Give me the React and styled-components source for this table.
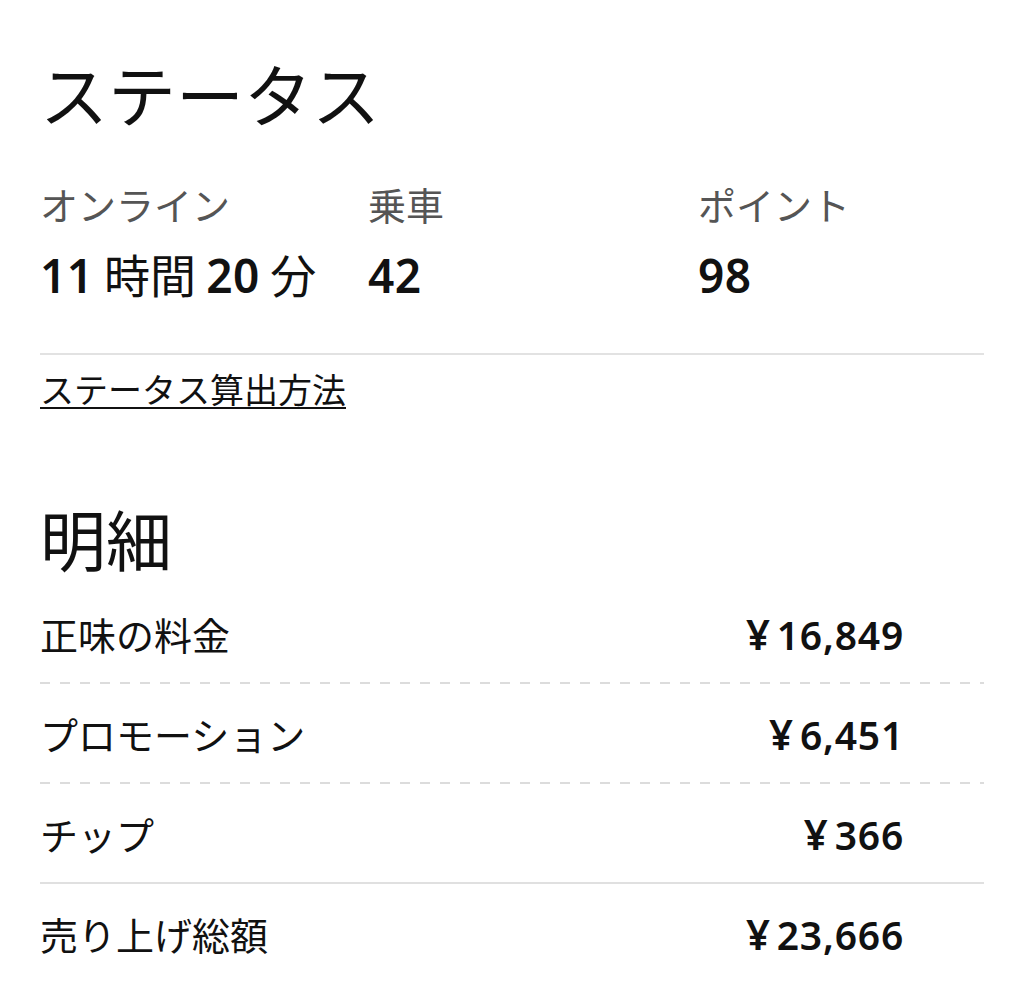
import React from 'react'
import styled, { createGlobalStyle } from 'styled-components'

const GlobalStyle = createGlobalStyle`
body {
  margin: 0;
  background: #fff;
  font-family: "Noto Sans CJK JP", "Noto Sans", sans-serif;
  color: #111;
}
`;

const Page = styled.div`
padding: 53px 40px 0 40px;
`;

const Heading = styled.h1`
margin: 0;
font-size: 68px;
line-height: 80px;
font-weight: 400;
color: #111;
`;

const StatGrid = styled.div`
display: grid;
grid-template-columns: 328px 330px 1fr;
margin-top: 47px;
`;

const StatLabel = styled.div`
font-size: 38px;
line-height: 48px;
color: #555;
`;

const StatValue = styled.div`
margin-top: 17px;
font-size: 46px;
line-height: 56px;
color: #111;
white-space: nowrap;
`;

const Num = styled.span`
font-family: "Noto Sans", "Noto Sans CJK JP", sans-serif;
font-weight: 600;
letter-spacing: 0.5px;
`;

const Rule = styled.div`
height: 2px;
background: #e2e2e2;
margin-top: 50px;
`;

const Link = styled.a`
display: inline-block;
margin-top: 12px;
font-size: 34px;
line-height: 44px;
color: #111;
text-decoration: underline;
text-decoration-thickness: 2px;
text-underline-offset: 4px;
`;

const SubHeading = styled.h2`
margin: 86px 0 0 0;
font-size: 66px;
line-height: 80px;
font-weight: 400;
`;

const List = styled.div`
margin-top: 7px;
`;

const Row = styled.div`
display: flex;
align-items: center;
justify-content: space-between;
height: 98px;
padding-right: 80px;
border-bottom: 2px solid transparent;
border-image: ${p =>
    p.$line === 'dashed'
      ? 'repeating-linear-gradient(to right, #dcdcdc 0 10px, transparent 10px 20px) 0 0 2 0 / 0 0 2px 0'
      : p.$line === 'solid'
      ? 'linear-gradient(#e0e0e0, #e0e0e0) 0 0 2 0 / 0 0 2px 0'
      : 'none'};
`;

const RowLabel = styled.span`
font-size: 38px;
color: #111;
`;

const Amount = styled.span`
font-family: "Noto Sans", "Noto Sans CJK JP", sans-serif;
font-size: 39px;
font-weight: 600;
letter-spacing: 0.8px;
color: #111;
`;

const Yen = styled.span`
font-size: 42px;
margin-right: 6px;
`;

const stats = [
  { label: 'オンライン', value: <><Num>11</Num> 時間 <Num>20</Num> 分</> },
  { label: '乗車', value: <Num>42</Num> },
  { label: 'ポイント', value: <Num>98</Num> },
];

const rows = [
  { label: '正味の料金', amount: '16,849', line: 'dashed' },
  { label: 'プロモーション', amount: '6,451', line: 'dashed' },
  { label: 'チップ', amount: '366', line: 'solid' },
  { label: '売り上げ総額', amount: '23,666', line: 'none' },
];

const App = () => {
  return (
    <Page>
      <GlobalStyle />
      <Heading>ステータス</Heading>
      <StatGrid>
        {stats.map(s => (
          <div key={s.label}>
            <StatLabel>{s.label}</StatLabel>
            <StatValue>{s.value}</StatValue>
          </div>
        ))}
      </StatGrid>
      <Rule />
      <Link>ステータス算出方法</Link>
      <SubHeading>明細</SubHeading>
      <List>
        {rows.map(r => (
          <Row key={r.label} $line={r.line}>
            <RowLabel>{r.label}</RowLabel>
            <Amount><Yen>¥</Yen>{r.amount}</Amount>
          </Row>
        ))}
      </List>
    </Page>
  )
}

export default App
